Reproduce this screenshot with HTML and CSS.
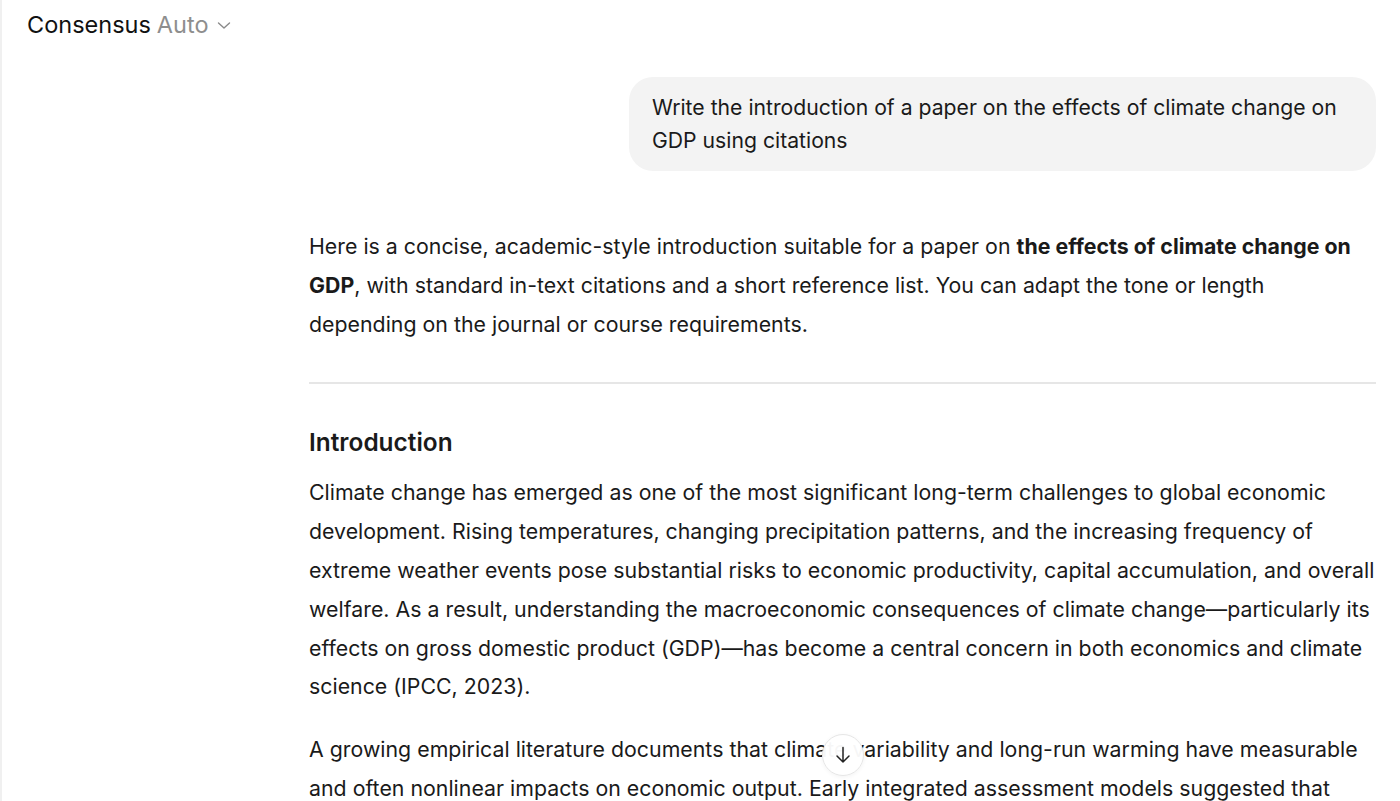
FILE: index.html
```html
<!DOCTYPE html>
<html lang="en">
<head>
<meta charset="utf-8">
<title>Consensus</title>
<link rel="stylesheet" href="styles.css">
</head>
<body>
<div class="app">
  <header class="topbar">
    <span class="brand">Consensus</span>
    <span class="mode">Auto</span>
    <svg class="chev" width="16" height="16" viewBox="0 0 16 16" aria-hidden="true"><path d="M2.5 6 L8 11 L13.5 6" fill="none" stroke="#8a8a8a" stroke-width="1.4" stroke-linecap="round" stroke-linejoin="round"/></svg>
  </header>
  <main class="thread">
    <div class="user-row">
      <div class="bubble">Write the introduction of a paper on the effects of climate change on GDP using citations</div>
    </div>
    <div class="answer">
      <p>Here is a concise, academic-style introduction suitable for a paper on <strong>the effects of climate change on GDP</strong>, with standard in-text citations and a short reference list. You can adapt the tone or length depending on the journal or course requirements.</p>
      <hr class="rule">
      <h3 class="heading">Introduction</h3>
      <p>Climate change has emerged as one of the most significant long-term challenges to global economic development. Rising temperatures, changing precipitation patterns, and the increasing frequency of extreme weather events pose substantial risks to economic productivity, capital accumulation, and overall welfare. As a result, understanding the macroeconomic consequences of climate change—particularly its effects on gross domestic product (GDP)—has become a central concern in both economics and climate science (IPCC, 2023).</p>
      <p>A growing empirical literature documents that climate variability and long-run warming have measurable and often nonlinear impacts on economic output. Early integrated assessment models suggested that</p>
    </div>
  </main>
  <button class="scroll-btn" aria-label="Scroll to bottom">
    <svg width="22" height="22" viewBox="0 0 22 22" aria-hidden="true"><path d="M11 3.5 V18 M5 12 L11 18 L17 12" fill="none" stroke="#222" stroke-width="1.5" stroke-linecap="round" stroke-linejoin="round"/></svg>
  </button>
</div>
</body>
</html>
```
FILE: styles.css
```css
* { box-sizing: border-box; }
html, body { margin: 0; padding: 0; height: 100%; overflow: hidden; background: #fff; }
body { font-family: Inter, "Noto Sans", sans-serif; color: #1a1a1a; }
.app { position: relative; height: 801px; border-left: 2px solid #f0f0f0; overflow: hidden; }
.topbar { display: flex; align-items: center; height: 48px; padding-left: 25px; font-size: 23.5px; gap: 6px; }
.brand { color: #111; }
.mode { color: #8e8e8e; }
.chev { margin-left: 1px; margin-top: 2px; }
.thread { padding: 29px 24px 0 307px; display: flex; flex-direction: column; }
.user-row { display: flex; justify-content: flex-end; }
.bubble { max-width: 747px; background: #f3f3f3; border-radius: 24px; padding: 14px 23px 14px; font-size: 21.2px; line-height: 33px; color: #1a1a1a; }
.answer { margin-top: 56px; font-size: 21.3px; line-height: 38.8px; color: #1a1a1a; letter-spacing: 0.02px; }
.answer p { margin: 0 0 24px; }
.answer strong { font-weight: 700; }
.rule { border: 0; border-top: 2px solid #e6e6e6; margin: 39px 0 42px; }
.heading { font-size: 24.4px; font-weight: 600; line-height: 32px; margin: 0 0 15px; }
.scroll-btn { position: absolute; left: 820px; top: 734px; width: 42px; height: 42px; border-radius: 50%; border: 1px solid #e6e6e6; background: rgba(255,255,255,0.96); display: flex; align-items: center; justify-content: center; padding: 0; box-shadow: 0 1px 4px rgba(0,0,0,0.05); }
```
